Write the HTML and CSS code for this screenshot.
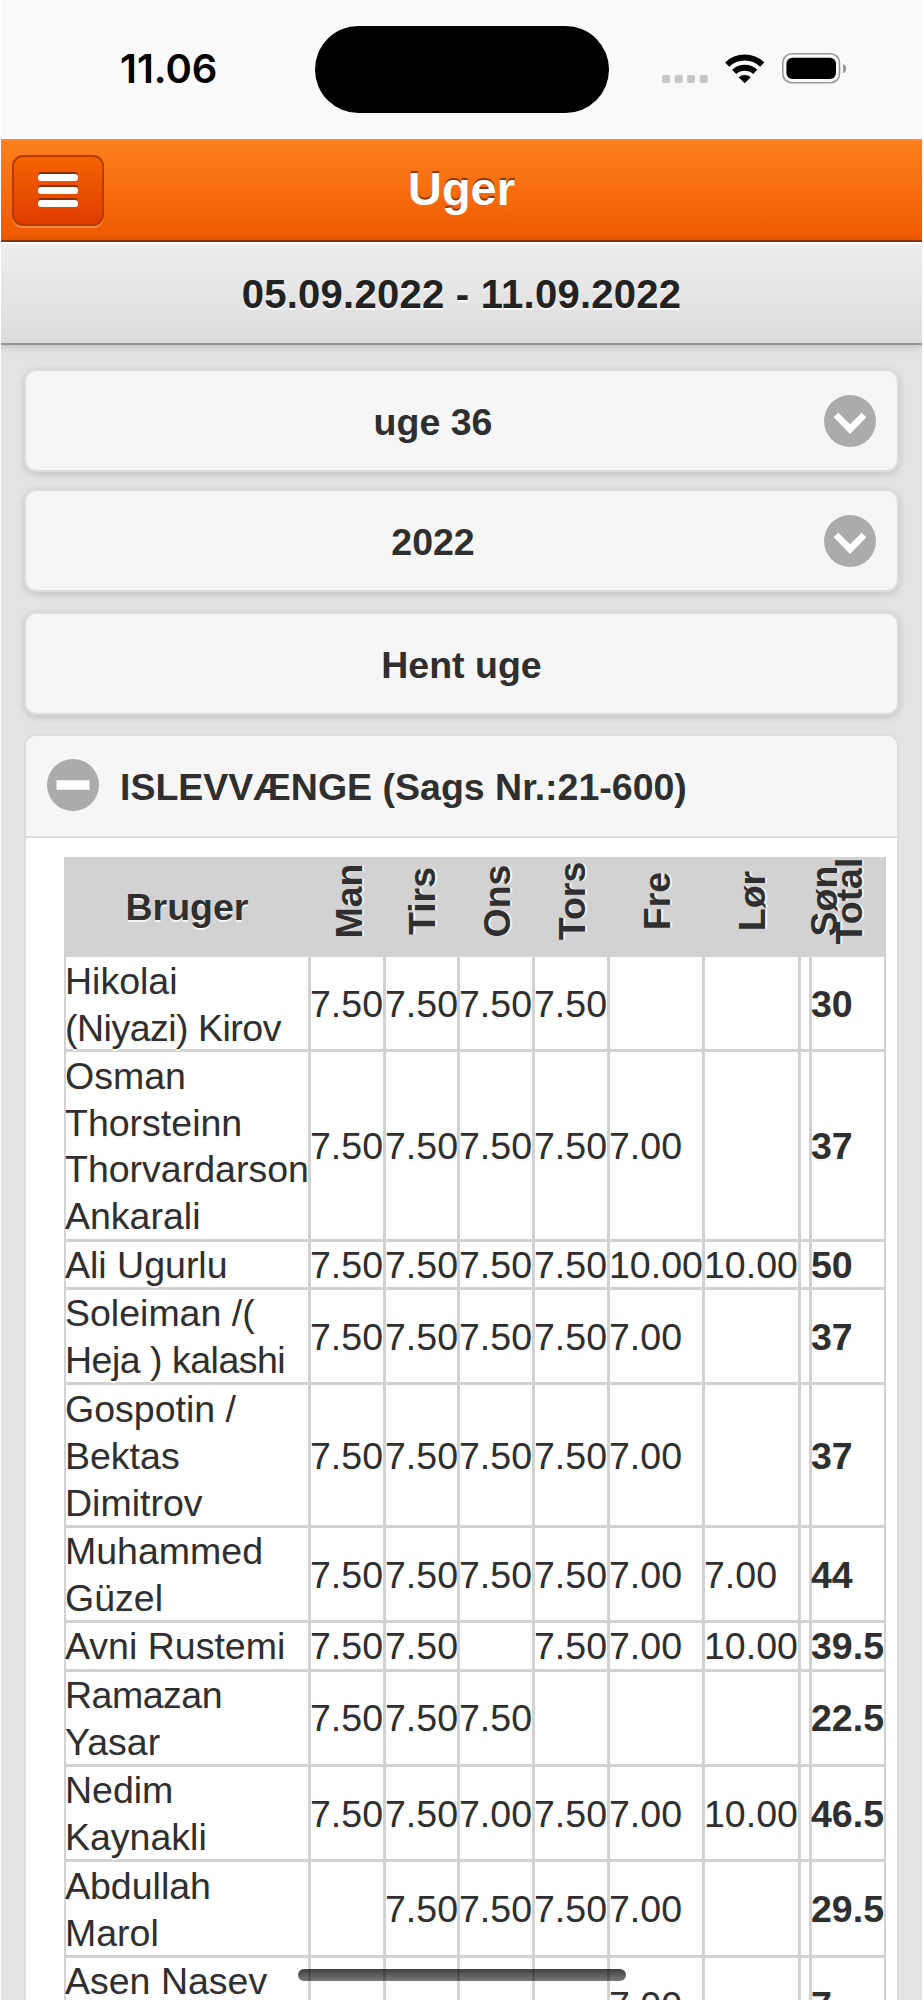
FILE: index.html
```html
<!DOCTYPE html>
<html lang="da">
<head>
<meta charset="utf-8">
<title>Uger</title>
<link rel="stylesheet" href="styles.css">
</head>
<body>
<div class="screen">
  <div class="status">
    <span class="time">11.06</span>
    <span class="island"></span>
    <svg class="status-icons" width="190" height="40" viewBox="660 48 190 40">
      <g fill="#c6c6c6"><rect x="662" y="75" width="8" height="8" rx="2"/><rect x="674.7" y="75" width="8" height="8" rx="2"/><rect x="687" y="75" width="8" height="8" rx="2"/><rect x="699.7" y="75" width="8" height="8" rx="2"/></g>
      <g fill="none" stroke="#000" stroke-width="6"><path d="M727.2 64.6a25.4 25.4 0 0 1 35 0"/><path d="M734.2 71.900a15.500 15.500 0 0 1 21 0"/></g>
      <path d="M738.6 77.300a9 9 0 0 1 12.200 0L744.700 83.300z"/>
      <rect x="782.800" y="53.800" width="56.700" height="29" rx="9" fill="none" stroke="#999" stroke-width="1.600"/>
      <rect x="786.400" y="57.800" width="49.600" height="21.200" rx="6"/>
      <path d="M843 64q3.200 1 3.200 4.600T843 73.200z" fill="#999"/>
    </svg>
  </div>
  <header class="bar">
    <button class="menu" aria-label="Menu"><i></i><i></i><i></i></button>
    <h1 class="title">Uger</h1>
  </header>
  <div class="range">05.09.2022 - 11.09.2022</div>
  <main class="content">
    <div class="btn">uge 36
      <svg class="arrow" width="52" height="52" viewBox="0 0 52 52"><circle cx="26" cy="26" r="26" fill="#ababab"/><path fill="#fff" d="M14.300 17.700 26 29.300 37.700 17.700 42.300 22.300 26 39 9.700 22.300z"/></svg>
    </div>
    <div class="btn">2022
      <svg class="arrow" width="52" height="52" viewBox="0 0 52 52"><circle cx="26" cy="26" r="26" fill="#ababab"/><path fill="#fff" d="M14.300 17.700 26 29.300 37.700 17.700 42.300 22.300 26 39 9.700 22.300z"/></svg>
    </div>
    <div class="btn fetch">Hent uge</div>
    <section class="panel">
      <h2 class="panel-head">
        <svg width="52" height="52" viewBox="0 0 52 52"><circle cx="26" cy="26" r="26" fill="#ababab"/><path fill="#fff" d="M9.500 21.300h33v9.500h-33z"/></svg>
        <span>ISLEVVÆNGE (Sags Nr.:21-600)</span>
      </h2>
      <div class="table">
        <div class="row head"><b class="user">Bruger</b><b><span>Man</span></b><b><span>Tirs</span></b><b><span>Ons</span></b><b><span>Tors</span></b><b><span>Fre</span></b><b><span>Lør</span></b><b class="sun"><span>Søn</span></b><b><span>Total</span></b></div>
        <div class="grid">
          <p><span>Hikolai<br><span class="tight">(Niyazi) Kirov</span></span></p><p>7.50</p><p>7.50</p><p>7.50</p><p>7.50</p><p></p><p></p><p></p><p class="sum">30</p>
          <p>Osman<br>Thorsteinn<br>Thorvardarson<br>Ankarali</p><p>7.50</p><p>7.50</p><p>7.50</p><p>7.50</p><p>7.00</p><p></p><p></p><p class="sum">37</p>
          <p>Ali Ugurlu</p><p>7.50</p><p>7.50</p><p>7.50</p><p>7.50</p><p>10.00</p><p>10.00</p><p></p><p class="sum">50</p>
          <p><span>Soleiman /(<br><span class="tight">Heja ) kalashi</span></span></p><p>7.50</p><p>7.50</p><p>7.50</p><p>7.50</p><p>7.00</p><p></p><p></p><p class="sum">37</p>
          <p>Gospotin /<br>Bektas<br>Dimitrov</p><p>7.50</p><p>7.50</p><p>7.50</p><p>7.50</p><p>7.00</p><p></p><p></p><p class="sum">37</p>
          <p>Muhammed<br>Güzel</p><p>7.50</p><p>7.50</p><p>7.50</p><p>7.50</p><p>7.00</p><p>7.00</p><p></p><p class="sum">44</p>
          <p>Avni Rustemi</p><p>7.50</p><p>7.50</p><p></p><p>7.50</p><p>7.00</p><p>10.00</p><p></p><p class="sum">39.5</p>
          <p><span><span class="tight">Ramazan</span><br>Yasar</span></p><p>7.50</p><p>7.50</p><p>7.50</p><p></p><p></p><p></p><p></p><p class="sum">22.5</p>
          <p>Nedim<br>Kaynakli</p><p>7.50</p><p>7.50</p><p>7.00</p><p>7.50</p><p>7.00</p><p>10.00</p><p></p><p class="sum">46.5</p>
          <p>Abdullah<br>Marol</p><p></p><p>7.50</p><p>7.50</p><p>7.50</p><p>7.00</p><p></p><p></p><p class="sum">29.5</p>
          <p>Asen Nasev<br>&nbsp;</p><p></p><p></p><p></p><p></p><p>7.00</p><p></p><p></p><p class="sum">7</p>
        </div>
      </div>
    </section>
  </main>
  <div class="home"></div>
</div>
</body>
</html>
```

FILE: styles.css
```css
* { box-sizing: border-box; }
html, body { margin: 0; background: #fff; overflow: hidden; }
body { font-family: "Liberation Sans", Arial, sans-serif; font-size: 37.5px; color: #2f2f2f; }
h1, h2, p { margin: 0; }

.screen { position: relative; width: 921px; height: 2000px; margin-left: 1px; overflow: hidden; background: #e3e3e3; }

.status { position: relative; height: 139px; background: #f9f9f9; }
.time { position: absolute; left: 119px; top: 45px; font: 600 40px/48px Inter, sans-serif; letter-spacing: 0; color: #000; }
.island { position: absolute; left: 314px; top: 26px; width: 294px; height: 87px; border-radius: 44px; background: #000; }
.status-icons { position: absolute; left: 659px; top: 48px; }

.bar { position: relative; display: flex; align-items: center; justify-content: center; height: 103px; background: linear-gradient(#fc8120, #ef5900); border-top: 1px solid #fb9040; border-bottom: 2px solid #8a3a0c; }
.title { font-size: 47px; line-height: 54px; padding-bottom: 3px; color: #fff; text-shadow: 0 -2px 0 #8a3a0c; }
.menu { position: absolute; left: 11px; top: 15px; width: 92px; height: 71px; padding: 0; display: flex; flex-direction: column; align-items: center; justify-content: center; gap: 6px; border: 2px solid #b83c00; border-radius: 11px; background: linear-gradient(#f46400, #e03c00); box-shadow: 0 2px 0 rgba(255, 255, 255, .28); }
.menu i { display: block; width: 40px; height: 7px; border-radius: 3px; background: #fff; box-shadow: 0 -2px 0 #8f2e00; }

.range { position: relative; height: 103px; text-align: center; font-weight: bold; font-size: 40px; letter-spacing: .25px; line-height: 101px; color: #222; text-shadow: 0 2px 0 #fafafa; background: linear-gradient(#eee, #dcdcdc); border-top: 2px solid #fff; border-bottom: 2px solid #969696; box-shadow: 0 1px 8px rgba(0, 0, 0, .2); }

.content { padding: 24px 23px 0; }
.btn { position: relative; height: 103px; margin-bottom: 17px; border: 2px solid #dcdcdc; border-radius: 12px; background: #f6f6f6; box-shadow: 0 2px 7px rgba(0, 0, 0, .15); text-align: center; font-weight: bold; line-height: 102px; padding-right: 57px; text-shadow: 0 2px 0 #f8f8f8; }
.btn + .btn { margin-bottom: 20px; }
.btn + .btn.fetch { padding-right: 0; margin-bottom: 19px; }
.arrow { position: absolute; right: 21px; top: 24px; }

.panel { height: 1400px; border: 2px solid #dcdcdc; border-radius: 12px; background: #fff; overflow: hidden; }
.panel-head { display: flex; align-items: center; height: 102px; padding: 0 0 2px 21px; gap: 21px; font-size: 37.5px; line-height: 48px; white-space: nowrap; background: #f6f6f6; border-bottom: 2px solid #dcdcdc; }
.panel-head span { position: relative; top: 2px; }

.table { margin: 19px 0 0 38px; width: 822px; background: #d2d2d2; padding: 0 2px; text-shadow: 0 2px 0 #f6f6f6; }
.row, .grid { display: grid; grid-template-columns: 242px 72px 71px 72px 72px 92px 93px 8px 72px; column-gap: 3px; }
.head { height: 100px; align-items: center; text-align: center; }
.head b { display: flex; justify-content: center; line-height: 42px; }
.head span { transform: translate(1px, -6px) rotate(-90deg); white-space: nowrap; }
.head .sun span { transform: translate(19px, -6px) rotate(-90deg); }
.grid { grid-template-rows: 92.4px 186.2px 45.5px 92.4px 139.3px 92.4px 45.5px 92.4px 92.4px 92.4px 92.4px; row-gap: 3px; padding-bottom: 3px; }
.grid p { display: flex; align-items: center; padding-top: 4px; line-height: 46.9px; white-space: nowrap; background: #fff; text-indent: -1px; }
.grid p:nth-child(9n+1) { text-indent: 0; }
.grid p:nth-child(9n+1)::before { content: ""; margin-left: -1px; }
.grid p + p { padding-top: 2px; }
.grid .sum { font-weight: bold; }
.tight { letter-spacing: -.5px; }

.home { position: absolute; left: 297px; top: 1969px; width: 328px; height: 12px; border-radius: 6px; background: linear-gradient(rgba(0, 0, 0, .75), rgba(0, 0, 0, .52)); }
```
